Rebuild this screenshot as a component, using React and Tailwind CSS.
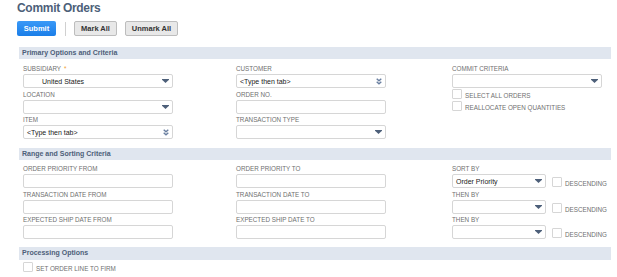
import React from 'react';

const Arrow = () => (
  <svg width="7" height="4" viewBox="0 0 7 4" className="shrink-0">
    <path d="M0 0h7v0.8L3.5 4 0 0.8z" fill="#4d5f79" />
  </svg>
);

const DoubleChevron = () => (
  <svg width="6" height="7" viewBox="0 0 6 7" className="shrink-0">
    <path d="M0.7 0.7L3 2.8 5.3 0.7M0.7 3.7L3 5.8 5.3 3.7" fill="none" stroke="#6a7fa0" strokeWidth="1.4" />
  </svg>
);

function Label({ children, required }) {
  return (
    <div className="h-[8px] mb-[1px] text-[6.3px] leading-[8px] text-[#707070] uppercase whitespace-nowrap">
      {children}
      {required && <span className="text-[#f0a030] ml-[3px]">*</span>}
    </div>
  );
}

function Box({ value, icon, width = 'w-[150px]', indent }) {
  return (
    <div className={`${width} h-[14px] border border-[#d6d6d6] rounded-[2px] bg-white flex items-center pr-[3px] ${indent ? 'pl-[18px]' : 'pl-[3px]'}`}>
      <span className="flex-1 text-[7px] text-[#222] whitespace-nowrap leading-none">{value}</span>
      {icon === 'arrow' && <Arrow />}
      {icon === 'chev' && <DoubleChevron />}
    </div>
  );
}

function Field({ label, required, ...rest }) {
  return (
    <div>
      <Label required={required}>{label}</Label>
      <Box {...rest} />
    </div>
  );
}

function Check({ label, className = '' }) {
  return (
    <div className={`flex items-end gap-[3px] ${className}`}>
      <div className="w-[10px] h-[10px] border border-[#d6d6d6] rounded-[1px] bg-white" />
      <span className="text-[6.3px] leading-[7px] text-[#707070] uppercase whitespace-nowrap">{label}</span>
    </div>
  );
}

function SortRow({ label, value }) {
  return (
    <div>
      <Label>{label}</Label>
      <div className="flex items-end gap-[6px]">
        <Box value={value} icon="arrow" width="w-[94px]" />
        <Check label="Descending" className="mb-[1px]" />
      </div>
    </div>
  );
}

function Header({ children, className = '' }) {
  return (
    <div className={`h-[12px] bg-[#e0e6ef] flex items-center pl-[3px] text-[7px] font-bold text-[#4d5f79] ${className}`}>
      {children}
    </div>
  );
}

export default function App() {
  return (
    <div className="w-[617px] h-[277px] bg-white overflow-hidden font-['Liberation_Sans',Arial,sans-serif]">
      <div className="pl-[17px] pr-[6px]">
        <h1 className="text-[12px] font-bold text-[#4d5f79] leading-[15px] pt-[1px] tracking-[-0.3px]">Commit Orders</h1>

        <div className="flex items-center mt-[5px] h-[15px]">
          <button className="h-[15px] w-[39px] rounded-[2px] bg-gradient-to-b from-[#3a99f7] to-[#1a7ee8] text-white text-[7.5px] font-bold">Submit</button>
          <div className="w-px h-[14px] bg-[#d0d0d0] ml-[9px] mr-[8px]" />
          <button className="h-[15px] w-[43px] rounded-[2px] bg-[#e8e8e8] border border-[#bdbdbd] text-[#333] text-[7.5px] font-bold">Mark All</button>
          <button className="h-[15px] w-[53px] ml-[8px] rounded-[2px] bg-[#e8e8e8] border border-[#bdbdbd] text-[#333] text-[7.5px] font-bold">Unmark All</button>
        </div>

        <Header className="mt-[11px] ml-[2px]">Primary Options and Criteria</Header>
        <div className="grid grid-cols-[213px_216px_1fr] pl-[6px] pt-[6px]">
          <div className="flex flex-col gap-[2.5px]">
            <Field label="Subsidiary" required value="United States" icon="arrow" indent />
            <Field label="Location" icon="arrow" />
            <Field label="Item" value="<Type then tab>" icon="chev" />
          </div>
          <div className="flex flex-col gap-[2.5px]">
            <Field label="Customer" value="<Type then tab>" icon="chev" />
            <Field label="Order No." />
            <Field label="Transaction Type" icon="arrow" />
          </div>
          <div className="flex flex-col">
            <Field label="Commit Criteria" icon="arrow" />
            <Check label="Select All Orders" className="mt-[1px]" />
            <Check label="Reallocate Open Quantities" className="mt-[2px]" />
          </div>
        </div>

        <Header className="mt-[9px] ml-[2px]">Range and Sorting Criteria</Header>
        <div className="grid grid-cols-[213px_216px_1fr] pl-[6px] pt-[5px]">
          <div className="flex flex-col gap-[2.5px]">
            <Field label="Order Priority From" />
            <Field label="Transaction Date From" />
            <Field label="Expected Ship Date From" />
          </div>
          <div className="flex flex-col gap-[2.5px]">
            <Field label="Order Priority To" />
            <Field label="Transaction Date To" />
            <Field label="Expected Ship Date To" />
          </div>
          <div className="flex flex-col gap-[2.5px]">
            <SortRow label="Sort By" value="Order Priority" />
            <SortRow label="Then By" />
            <SortRow label="Then By" />
          </div>
        </div>

        <Header className="mt-[8px] ml-[2px] h-[13px]">Processing Options</Header>
        <div className="pl-[6px] pt-[2px]">
          <Check label="Set Order Line to Firm" />
        </div>
      </div>
    </div>
  );
}
